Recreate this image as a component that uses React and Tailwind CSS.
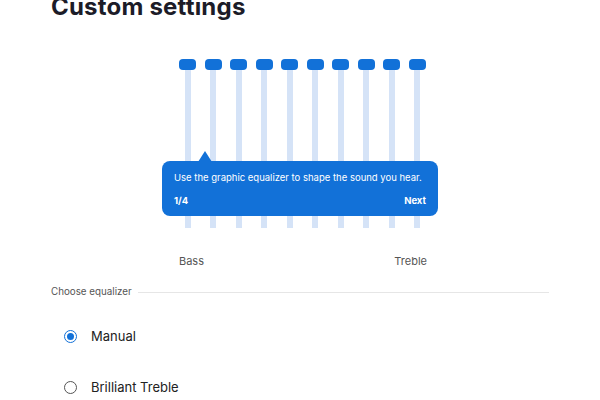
import React from "react";

export default function App() {
  const bars = Array.from({ length: 10 });
  return (
    <div className="w-[600px] h-[400px] bg-white overflow-hidden relative" style={{ fontFamily: "Inter, 'Noto Sans', sans-serif" }}>
      <div className="pl-[51px] pr-[51px]">
        <h1 className="text-[24px] leading-[30px] font-bold text-[#1c1c28] mt-[-8px] tracking-[0.2px]">Custom settings</h1>
        <div className="relative mt-[37px] ml-[128px] w-[248px]">
          <div className="flex gap-[8.5px]">
            {bars.map((_, i) => (
              <div key={i} className="flex flex-col items-center w-[17px]">
                <div className="w-[17px] h-[11px] rounded-[4px] bg-[#1271d8]" />
                <div className="w-[6px] h-[158px] bg-[#d5e3f7]" />
              </div>
            ))}
          </div>
          <div className="absolute left-[-17px] top-[102px] w-[276px] h-[55px] rounded-[8px] bg-[#1271d8] text-white px-[12px] pt-[10px]">
            <div className="absolute left-[36px] top-[-10px] w-0 h-0 border-l-[7px] border-r-[7px] border-b-[11px] border-l-transparent border-r-transparent border-b-[#1271d8]" />
            <div className="text-[9.5px] leading-[13px]">Use the graphic equalizer to shape the sound you hear.</div>
            <div className="flex justify-between text-[9.5px] font-bold mt-[10px] leading-[13px]">
              <span>1/4</span>
              <span>Next</span>
            </div>
          </div>
          <div className="flex justify-between mt-[26px] text-[11px] text-[#555] leading-[14px]">
            <span>Bass</span>
            <span>Treble</span>
          </div>
        </div>
        <div className="flex items-center mt-[18px] gap-[6px]">
          <span className="text-[9.8px] text-[#555] leading-[12px]">Choose equalizer</span>
          <div className="flex-1 h-px bg-[#e6e6e6]" />
        </div>
        <div className="flex items-center mt-[30px] ml-[13px] gap-[14px]">
          <div className="w-[13px] h-[13px] rounded-full border-[1.5px] border-[#1271d8] flex items-center justify-center">
            <div className="w-[7px] h-[7px] rounded-full bg-[#1271d8]" />
          </div>
          <span className="text-[13px] text-[#222] leading-[16px]">Manual</span>
        </div>
        <div className="flex items-center mt-[35px] ml-[13px] gap-[14px]">
          <div className="w-[13px] h-[13px] rounded-full border-[1.5px] border-[#555]" />
          <span className="text-[13px] text-[#222] leading-[16px]">Brilliant Treble</span>
        </div>
      </div>
    </div>
  );
}
